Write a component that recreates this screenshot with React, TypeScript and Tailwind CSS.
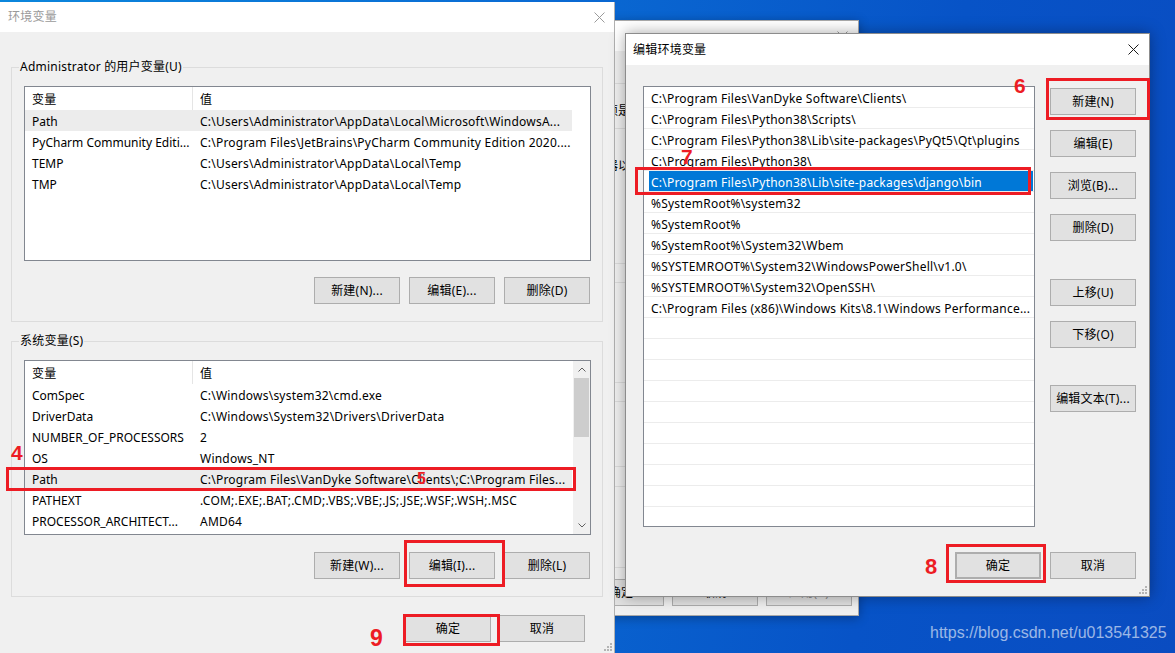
import React from "react"

const userVars = [
  ["Path", "C:\\Users\\Administrator\\AppData\\Local\\Microsoft\\WindowsA..."],
  ["PyCharm Community Editi...", "C:\\Program Files\\JetBrains\\PyCharm Community Edition 2020...."],
  ["TEMP", "C:\\Users\\Administrator\\AppData\\Local\\Temp"],
  ["TMP", "C:\\Users\\Administrator\\AppData\\Local\\Temp"],
]

const sysVars = [
  ["ComSpec", "C:\\Windows\\system32\\cmd.exe"],
  ["DriverData", "C:\\Windows\\System32\\Drivers\\DriverData"],
  ["NUMBER_OF_PROCESSORS", "2"],
  ["OS", "Windows_NT"],
  ["Path", "C:\\Program Files\\VanDyke Software\\Clients\\;C:\\Program Files..."],
  ["PATHEXT", ".COM;.EXE;.BAT;.CMD;.VBS;.VBE;.JS;.JSE;.WSF;.WSH;.MSC"],
  ["PROCESSOR_ARCHITECT...", "AMD64"],
]

const paths = [
  "C:\\Program Files\\VanDyke Software\\Clients\\",
  "C:\\Program Files\\Python38\\Scripts\\",
  "C:\\Program Files\\Python38\\Lib\\site-packages\\PyQt5\\Qt\\plugins",
  "C:\\Program Files\\Python38\\",
  "C:\\Program Files\\Python38\\Lib\\site-packages\\django\\bin",
  "%SystemRoot%\\system32",
  "%SystemRoot%",
  "%SystemRoot%\\System32\\Wbem",
  "%SYSTEMROOT%\\System32\\WindowsPowerShell\\v1.0\\",
  "%SYSTEMROOT%\\System32\\OpenSSH\\",
  "C:\\Program Files (x86)\\Windows Kits\\8.1\\Windows Performance...",
]

const CloseX = ({ color }: { color: string }) => (
  <svg width="11" height="11" viewBox="0 0 11 11">
    <path d="M0.5 0.5 L10.5 10.5 M10.5 0.5 L0.5 10.5" stroke={color} strokeWidth="1" />
  </svg>
)

const Grip = () => (
  <svg width="8" height="8" viewBox="0 0 8 8" className="absolute right-[2px] bottom-[2px]">
    <rect x="6" y="0" width="2" height="2" fill="#b4b4b4" />
    <rect x="3" y="3" width="2" height="2" fill="#b4b4b4" />
    <rect x="6" y="3" width="2" height="2" fill="#b4b4b4" />
    <rect x="0" y="6" width="2" height="2" fill="#b4b4b4" />
    <rect x="3" y="6" width="2" height="2" fill="#b4b4b4" />
    <rect x="6" y="6" width="2" height="2" fill="#b4b4b4" />
  </svg>
)

const Btn = ({ label, className = "" }: { label: string; className?: string }) => (
  <div
    className={`w-[86px] h-[27px] shrink-0 border border-[#adadad] bg-[#e1e1e1] flex items-center justify-center whitespace-nowrap ${className}`}
  >
    {label}
  </div>
)

const Chevron = ({ up }: { up?: boolean }) => (
  <div className="h-[17px] flex items-center justify-center">
    <svg width="8" height="5" viewBox="0 0 8 5">
      <path d={up ? "M0.5 4.5 L4 1 L7.5 4.5" : "M0.5 0.5 L4 4 L7.5 0.5"} stroke="#606060" fill="none" />
    </svg>
  </div>
)

const VarList = ({ rows, selected, scroll }: { rows: string[][]; selected: number; scroll?: boolean }) => (
  <div className="ml-[12px] mt-[11px] h-[175px] w-[567px] border border-[#828790] bg-white flex overflow-hidden">
    <div className="w-[547px] flex flex-col">
      <div className="h-[23px] shrink-0 flex items-stretch">
        <div className="w-[168px] pl-[7px] pt-[2px] flex items-center border-r border-[#e5e5e5]">变量</div>
        <div className="pl-[7px] pt-[2px] flex items-center">值</div>
      </div>
      {rows.map(([k, v], i) => (
        <div key={i} className={`h-[21px] shrink-0 flex items-center pt-[2px] ${i === selected ? "bg-[#ececec]" : ""}`}>
          <div className="w-[168px] shrink-0 pl-[7px] whitespace-nowrap tracking-normal">{k}</div>
          <div className="pl-[7px] whitespace-nowrap">{v}</div>
        </div>
      ))}
    </div>
    {scroll && (
      <div className="ml-auto w-[17px] bg-[#f0f0f0] flex flex-col">
        <Chevron up />
        <div className="h-[59px] mx-[1px] bg-[#cdcdcd]" />
        <div className="flex-1" />
        <Chevron />
      </div>
    )}
  </div>
)

const Mark = ({ n, className }: { n: string; className: string }) => (
  <div className={`absolute font-['Liberation_Sans',sans-serif] font-bold leading-none tracking-normal text-[#ed1c24] ${className}`}>{n}</div>
)

const Box = ({ className }: { className: string }) => (
  <div className={`absolute border-[3px] border-[#ed1c24] ${className}`} />
)

export default function App() {
  return (
    <div className="relative w-[1175px] h-[653px] overflow-hidden text-[12px] tracking-[0.22px] text-black font-['Noto_Sans','Noto_Sans_CJK_SC',sans-serif] bg-[linear-gradient(100deg,#0b86dc_0%,#0a6cd4_40%,#0753c7_75%,#0a4cc1_100%)]">
      {/* dialog behind */}
      <div className="absolute left-[560px] top-[20px] w-[299px] h-[596px] bg-[#f0f0f0] border border-[#a8a8a8] shadow-[0_2px_10px_rgba(0,0,0,0.3)] flex flex-col">
        <div className="h-[30px] shrink-0 bg-white flex items-center justify-end pr-[10px]">
          <CloseX color="#9a9a9a" />
        </div>
        <div className="mt-[32px] mx-[8px] h-[485px] border border-[#dcdcdc] flex flex-col px-[10px] tracking-normal">
          <div className="mt-[18px] pl-[2px] whitespace-nowrap">你必须是管理员才能进行大多数更改。</div>
          <div className="mt-[8px] h-[136px] border border-[#dcdcdc] pt-[28px] pl-[1px] whitespace-nowrap">处理器以及虚拟内存</div>
          <div className="mt-[18px] h-[101px] border border-[#dcdcdc]" />
          <div className="mt-[18px] h-[66px] border border-[#dcdcdc]" />
          <div className="mt-[19px] h-[20px] border-t border-[#dcdcdc]" />
        </div>
        <div className="mt-auto pb-[9px] pr-[6px] flex justify-end gap-[8px]">
          <Btn label="确定" className="h-[26px]" />
          <Btn label="取消" className="h-[26px]" />
          <Btn label="应用(A)" className="h-[26px] bg-[#cccccc] text-[#8a8a8a]" />
        </div>
      </div>

      {/* 环境变量 */}
      <div className="absolute left-0 top-[2px] w-[615px] h-[651px] bg-[#f0f0f0] border-r border-[#b0b0b0] flex flex-col">
        <div className="h-[30px] shrink-0 bg-white flex items-center justify-between pl-[8px] pr-[9px]">
          <span className="text-[#9a9a9a]">环境变量</span>
          <CloseX color="#9a9a9a" />
        </div>
        <fieldset className="mt-[27px] ml-[11px] w-[592px] border border-[#dcdcdc] pb-[17px]">
          <legend className="ml-[7px] px-[1px] leading-[16px]">Administrator 的用户变量(U)</legend>
          <VarList rows={userVars} selected={0} />
          <div className="mt-[16px] pr-[12px] flex justify-end gap-[9px]">
            <Btn label="新建(N)..." />
            <Btn label="编辑(E)..." />
            <Btn label="删除(D)" />
          </div>
        </fieldset>
        <fieldset className="mt-[11px] ml-[11px] w-[592px] border border-[#dcdcdc] pb-[17px]">
          <legend className="ml-[7px] px-[1px] leading-[16px]">系统变量(S)</legend>
          <VarList rows={sysVars} selected={4} scroll />
          <div className="mt-[17px] pr-[12px] flex justify-end gap-[9px]">
            <Btn label="新建(W)..." />
            <Btn label="编辑(I)..." />
            <Btn label="删除(L)" />
          </div>
        </fieldset>
        <div className="mt-[18px] pr-[29px] flex justify-end gap-[8px]">
          <Btn label="确定" />
          <Btn label="取消" />
        </div>
        <Grip />
      </div>

      {/* 编辑环境变量 */}
      <div className="absolute left-[625px] top-[33px] w-[525px] h-[564px] bg-[#f0f0f0] border border-[#8c8c8c] shadow-[0_0_14px_rgba(0,0,0,0.35)] flex flex-col">
        <div className="h-[31px] shrink-0 bg-white flex items-center justify-between pl-[7px] pr-[10px]">
          <span>编辑环境变量</span>
          <CloseX color="#1a1a1a" />
        </div>
        <div className="pt-[21px] pl-[17px] flex">
          <div className="w-[392px] h-[441px] border border-[#828790] bg-white flex flex-col overflow-hidden">
            {Array.from({ length: 21 }).map((_, i) =>
              i === 4 ? (
                <div key={i} className="h-[21px] shrink-0 flex pl-[5px] pr-[1px] border-b border-[#ececec]">
                  <div className="flex-1 bg-[#0078d7] text-white pl-[2px] pt-[3px] flex items-center whitespace-nowrap">{paths[i]}</div>
                </div>
              ) : (
                <div key={i} className="h-[21px] shrink-0 flex items-center pl-[7px] pt-[3px] border-b border-[#ececec] whitespace-nowrap overflow-hidden">
                  {paths[i] ?? ""}
                </div>
              )
            )}
          </div>
          <div className="ml-[15px] pt-[2px] flex flex-col">
            <Btn label="新建(N)" />
            <Btn label="编辑(E)" className="mt-[15px]" />
            <Btn label="浏览(B)..." className="mt-[15px]" />
            <Btn label="删除(D)" className="mt-[15px]" />
            <Btn label="上移(U)" className="mt-[38px]" />
            <Btn label="下移(O)" className="mt-[15px]" />
            <Btn label="编辑文本(T)..." className="mt-[37px]" />
          </div>
        </div>
        <div className="mt-[25px] pr-[13px] flex justify-end gap-[9px]">
          <Btn label="确定" className="border-2 border-[#0078d7]" />
          <Btn label="取消" />
        </div>
        <Grip />
      </div>

      {/* annotations */}
      <Box className="left-[6px] top-[467px] w-[570px] h-[24px]" />
      <Box className="left-[404px] top-[540px] w-[101px] h-[47px]" />
      <Box className="left-[403px] top-[614px] w-[97px] h-[32px]" />
      <Box className="left-[1046px] top-[78px] w-[104px] h-[42px]" />
      <Box className="left-[635px] top-[167px] w-[396px] h-[28px]" />
      <Box className="left-[946px] top-[544px] w-[100px] h-[39px]" />
      <Mark n="4" className="left-[11px] top-[442px] text-[21px]" />
      <Mark n="5" className="left-[417px] top-[471px] text-[16px]" />
      <Mark n="6" className="left-[1014px] top-[75px] text-[21px]" />
      <Mark n="7" className="left-[681px] top-[146px] text-[21px]" />
      <Mark n="8" className="left-[925px] top-[556px] text-[22px]" />
      <Mark n="9" className="left-[370px] top-[627px] text-[23px]" />

      <div className="absolute left-[930px] top-[624px] font-['Liberation_Sans',sans-serif] text-[16px] leading-[18px] tracking-normal text-white/60">
        https://blog.csdn.net/u013541325
      </div>
    </div>
  )
}
